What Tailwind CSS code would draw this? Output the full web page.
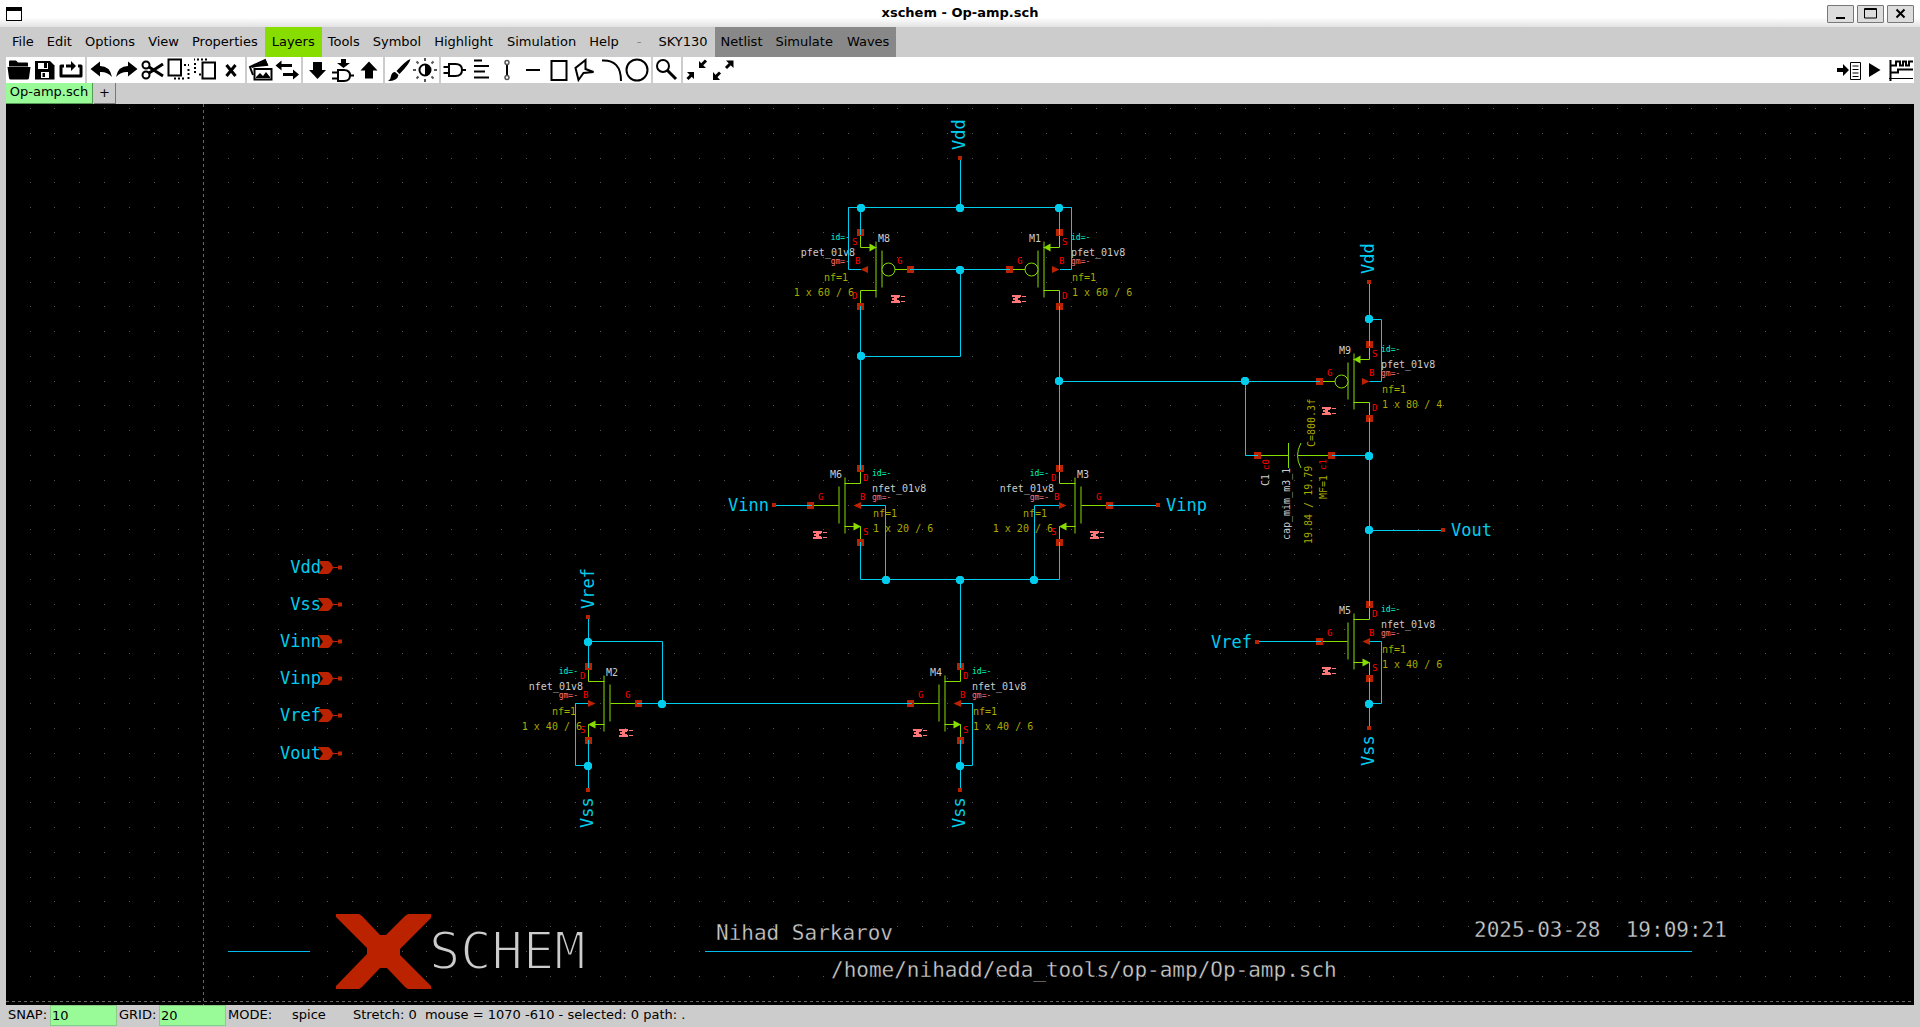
<!DOCTYPE html>
<html lang="en">
<head>
<meta charset="utf-8">
<title>xschem - Op-amp.sch</title>
<script src="https://cdn.jsdelivr.net/npm/@tailwindcss/browser@4"></script>
</head>
<body class="flex h-screen flex-col overflow-hidden bg-[#cccccc] font-['DejaVu_Sans',sans-serif] text-[13px] leading-4 text-black">

<header class="flex h-[27px] shrink-0 items-center justify-between bg-linear-to-b from-white from-65% to-[#e2e2e2] px-1.5">
  <div class="w-[87px]"><svg width="16" height="14" aria-hidden="true"><rect x=".5" y=".5" width="15" height="13" fill="#fff" stroke="#000"/><rect width="16" height="4"/></svg></div>
  <h1 class="pb-0.5 font-bold">xschem - Op-amp.sch</h1>
  <div class="flex gap-[3px]">
    <button aria-label="Minimize" class="grid h-[18px] w-[27px] place-items-center rounded-[1px] border border-[#777777] bg-[#dddddd]"><svg width="13" height="11"><path d="M2 10h9" stroke="#000" stroke-width="2"/></svg></button>
    <button aria-label="Maximize" class="grid h-[18px] w-[27px] place-items-center rounded-[1px] border border-[#777777] bg-[#dddddd]"><svg width="13" height="11"><path d="M.5 .5h12v9.500h-12zM0 1.500h13" fill="none" stroke="#000"/></svg></button>
    <button aria-label="Close" class="grid h-[18px] w-[27px] place-items-center rounded-[1px] border border-[#777777] bg-[#dddddd]"><svg width="13" height="11"><path d="M2.500 1.500l8 8m0-8l-8 8" stroke="#000" stroke-width="2"/></svg></button>
  </div>
</header>

<nav aria-label="Menu" class="flex h-[30px] shrink-0 items-stretch px-1.5">
  <button class="pr-[7px] pl-1.5">File</button>
  <button class="pr-[7px] pl-1.5">Edit</button>
  <button class="pr-[7px] pl-1.5">Options</button>
  <button class="pr-[7px] pl-1.5">View</button>
  <button class="pr-[7px] pl-1.5">Properties</button>
  <button class="bg-[#88dd00] px-[7px]">Layers</button>
  <button class="pr-[7px] pl-1.5">Tools</button>
  <button class="pr-[7px] pl-1.5">Symbol</button>
  <button class="pr-[7px] pl-1.5">Highlight</button>
  <button class="px-[7px]">Simulation</button>
  <button class="pr-[7px] pl-1.5">Help</button>
  <span class="px-[11px] pt-[7px] text-[#888888]">-</span>
  <button class="pr-[7px] pl-1.5">SKY130</button>
  <button class="bg-[#888888] pr-[7px] pl-1.5">Netlist</button>
  <button class="bg-[#888888] pr-[7px] pl-1.5">Simulate</button>
  <button class="bg-[#888888] px-[7px]">Waves</button>
</nav>

<div role="toolbar" aria-label="Tools" class="mx-1.5 flex h-[26px] shrink-0 bg-white">
  <div class="flex">
    <button aria-label="Open"><svg width="26" height="26"><path d="M3 4.500q0-1 1-1h6l2 2h9q1 0 1 1v3H3z"/><path d="M1.500 10h23l-1.500 11q0 1.500-2 1.500H5q-2 0-2-1.500z"/></svg></button>
    <button aria-label="Save"><svg width="26" height="26"><path d="M3 4h15l4.500 4.500V22.500H3z"/><path d="M6 6h10v6H6zM9 15h8v6H9z" fill="#fff"/><path d="M12 6h3v5h-3zM10.500 16h2.500v4h-2.500z"/></svg></button>
    <button aria-label="Reload"><svg width="26" height="26"><path d="M6 9H3v10h20V9h-3" fill="none" stroke="#000" stroke-width="3" stroke-linejoin="round"/><path d="M8 7.500h5V4l5 5-5 5v-3.500H8z"/></svg></button>
  </div>
  <div class="mx-px w-0.5 bg-[#cccccc]"></div>
  <div class="flex">
    <button aria-label="Undo"><svg width="26" height="26"><path d="M2.500 12L12 4.500v4.500q10 0 12 11-5-5.500-12-5v4.500z"/></svg></button>
    <button aria-label="Redo"><svg width="26" height="26"><path d="M23.500 12L14 4.500v4.500q-10 0-12 11 5-5.500 12-5v4.500z"/></svg></button>
    <button aria-label="Cut"><svg width="26" height="26" fill="none" stroke="#000" stroke-width="2"><circle cx="6" cy="8" r="3.500"/><circle cx="6" cy="18" r="3.500"/><path d="M9 10l14 9M9 16l14-9" stroke-width="3"/></svg></button>
    <button aria-label="Copy"><svg width="26" height="26" fill="none" stroke="#000" stroke-width="2"><path d="M2.500 2.500h12.500v16H2.500z"/><path d="M18 8h5M22.500 12v10M18 21.500H8" stroke-dasharray="2 2"/></svg></button>
    <button aria-label="Duplicate"><svg width="26" height="26" fill="none" stroke="#000" stroke-width="2"><path d="M10.500 5.500h12.500v16H10.500z"/><path d="M15 2.500H2M3 6v12M7 17.500h2" stroke-dasharray="2 2"/></svg></button>
    <button aria-label="Delete"><svg width="26" height="26"><path d="M8.500 8l9 11m0-11l-9 11" stroke="#000" stroke-width="3"/></svg></button>
  </div>
  <div class="mx-px w-0.5 bg-[#cccccc]"></div>
  <div class="flex">
    <button aria-label="Toggle images"><svg width="26" height="26" fill="none" stroke="#000" stroke-width="2"><path d="M5 18L2 10 17 3l2 5"/><path d="M4 10l9-3 4-3 2 4-11 1z" fill="#000"/><path d="M6.500 12h17v10.500h-17z"/><path d="M8 20l4-4 3 3 3-4 4 5v1H8z" fill="#000" stroke="none"/></svg></button>
    <button aria-label="Swap"><svg width="26" height="26"><path d="M5 8.500h13M9 17.500h12" stroke="#000" stroke-width="3"/><path d="M1.500 8.500l6-5v10zM25 17.500l-6-5v10z"/></svg></button>
  </div>
  <div class="mx-px w-0.5 bg-[#cccccc]"></div>
  <div class="flex">
    <button aria-label="Descend into schematic"><svg width="26" height="26"><path d="M9 5h9v8h4l-8.500 9L5 13h4z"/></svg></button>
    <button aria-label="Descend into symbol"><svg width="26" height="26"><path d="M11 2h5v4h4l-6.500 5L7 6h4z"/><path d="M8 13h6q6 0 6 5.500t-6 5.500H8zM2 15.500h6M2 21.500h6M20 18.500h4" fill="none" stroke="#000" stroke-width="2"/></svg></button>
    <button aria-label="Go up"><svg width="26" height="26"><path d="M9 21.500h8v-8h4.500L13 4.500 4.500 13.500H9z"/></svg></button>
  </div>
  <div class="mx-px w-0.5 bg-[#cccccc]"></div>
  <div class="flex">
    <button aria-label="Colors"><svg width="26" height="26"><path d="M24.500 2q-1 5-11 15l-3-3Q20 3.500 24.500 2zM9 15l3.500 3q-1 6-10.500 6 3-2 3-5 1-4 4-4z"/></svg></button>
    <button aria-label="Light or dark"><svg width="26" height="26"><circle cx="13" cy="13" r="5.500" fill="#fff" stroke="#000" stroke-width="2"/><path d="M13 7.500v11a5.500 5.500 0 000-11z"/><path d="M13 1v3M13 22v3M1 13h3M22 13h3M4.500 4.500l2 2M19.500 19.500l2 2M4.500 21.500l2-2M19.500 6.500l2-2" stroke="#555" stroke-width="2"/></svg></button>
  </div>
  <div class="mx-px w-0.5 bg-[#cccccc]"></div>
  <div class="flex">
    <button aria-label="Insert symbol"><svg width="26" height="26" fill="none" stroke="#000" stroke-width="2"><path d="M7 7h6.500q6.500 0 6.500 6t-6.500 6H7zM1.500 10H7M1.500 16H7M20 13h4"/></svg></button>
    <button aria-label="Insert text"><svg width="26" height="26"><path d="M6 3.500h8M6 9h15M6 14.500h11M6 20.500h15" stroke="#000" stroke-width="2"/></svg></button>
    <button aria-label="Insert wire"><svg width="26" height="26" fill="none"><path d="M13 7v12" stroke="#000" stroke-width="2"/><circle cx="13" cy="5.500" r="2" stroke="#555" stroke-width="1.500"/><circle cx="13" cy="20.500" r="2" stroke="#555" stroke-width="1.500"/></svg></button>
    <button aria-label="Insert line"><svg width="26" height="26"><path d="M6 13h14" stroke="#000" stroke-width="2"/></svg></button>
    <button aria-label="Insert rectangle"><svg width="26" height="26"><path d="M5.500 4h15v19h-15z" fill="none" stroke="#000" stroke-width="2"/></svg></button>
    <button aria-label="Insert polygon"><svg width="26" height="26"><path d="M13.500 3v9l8 3-10 1-5 7-3-12z" fill="none" stroke="#000" stroke-width="2"/></svg></button>
    <button aria-label="Insert arc"><svg width="26" height="26"><path d="M4 3.500q19-1 19 20.500" fill="none" stroke="#000" stroke-width="2"/></svg></button>
    <button aria-label="Insert circle"><svg width="26" height="26"><circle cx="13" cy="13" r="10.500" fill="none" stroke="#000" stroke-width="2"/></svg></button>
  </div>
  <div class="mx-px w-0.5 bg-[#cccccc]"></div>
  <button aria-label="Zoom"><svg width="26" height="26" fill="none" stroke="#000" stroke-width="2"><circle cx="9" cy="9" r="6"/><path d="M13 13l9 9" stroke-width="3"/></svg></button>
  <div class="mx-px w-0.5 bg-[#cccccc]"></div>
  <div class="flex">
    <button aria-label="Zoom out"><svg width="26" height="26"><path d="M15 4v7h7zM3 15h7v7z"/><path d="M22 3.500l-4 4M3.500 22l4-4" stroke="#000" stroke-width="3"/></svg></button>
    <button aria-label="Zoom in"><svg width="26" height="26"><path d="M16 3.500h7.500V11zM3 15v8h7z"/><path d="M20 7l-4 4M6 19.500l4-4" stroke="#000" stroke-width="3"/></svg></button>
  </div>
  <div class="ml-auto flex">
    <button aria-label="Netlist"><svg width="26" height="26"><path d="M1 11h6V7l6 6-6 6v-4H1z"/><path d="M14.500 5.500h10v17h-10zM16.500 9h6M16.500 12.500h6M16.500 16h6M16.500 19.500h6" fill="none" stroke="#000"/></svg></button>
    <button aria-label="Simulate"><svg width="26" height="26"><path d="M7 6v14l11.500-7z"/></svg></button>
    <button aria-label="Waves"><svg width="26" height="26" fill="none" stroke="#000" stroke-width="2"><path d="M2.500 3v21M2 8.500h6V4.500h4v4h3v-4h3v4h3v-4h4M3 15.500h7V12.500h15"/><path d="M1 21.500h24" stroke-width="1"/></svg></button>
  </div>
</div>

<div role="tablist" class="flex h-[21px] shrink-0 gap-px px-1.5">
  <button role="tab" aria-selected="true" class="h-[21px] w-[87px] border-r border-b border-[#559955] bg-[#98fb98] pb-0.5 text-center">Op-amp.sch</button>
  <button aria-label="New tab" class="h-[21px] w-[22px] border-r border-b border-[#777777] text-center">+</button>
</div>

<main class="mx-1.5 min-h-0 flex-1 bg-black">
<svg id="sheet" viewBox="6 104 1908 901" class="block h-full w-full font-['DejaVu_Sans_Mono',monospace]">
  <defs>
    <g id="core">
      <path d="M-47 0h25M-21.500-19V18M-15.500-28V28M0-34v12h-16M0 34V21h-16" fill="none" stroke="#88dd00"/>
      <path d="M-3.500-40.500h7v7h-7zM-3.500 33.500h7v7h-7zM-53.500-3.500h7v7h-7z" fill="#bb2200"/>
    </g>
    <g id="nfet"><use href="#core"/><path d="M-7 17v8L.5 21z" fill="#88dd00"/><path d="M-7 0L.5-3.500v7z" fill="#bb2200"/></g>
    <g id="pfet"><use href="#core"/><circle cx="-28" cy="0" r="6.500" fill="#000" stroke="#88dd00"/><path d="M-16-22l7-4v8z" fill="#88dd00"/><path d="M0 0l-7.500-3.500v7z" fill="#bb2200"/></g>
    <path id="probe" d="M0 0h9v2h-1v1h-2v2h2v1h1v2H0V6h3V5H1V3h2V2H0zM10 1h4v1h-4zM10 6h4v1h-4z" fill="#ff7777"/>
    <path id="node" d="M-2-4h4l2 2v4l-2 2h-4l-2-2v-4z" fill="#00ccee"/>
    <g id="port" fill="#bb2200"><path d="M0-6.500h10q3 1 5 6v1q-2 5-5 6H0q2-2 5-6.500-3-4-5-6z"/><path d="M14-.5h6v1h-6zM20-2h4v4h-4z"/></g>
  </defs>

  <path id="grid" stroke="#555555" shape-rendering="crispEdges"/>
  <path d="M203.500 104V1005M6 1001.500H1914" stroke="#666666" stroke-dasharray="3 3" shape-rendering="crispEdges"/>

  <g id="devices"></g>

  <g fill="none" stroke="#88dd00"><path d="M1261 455.500h27M1288.500 443v25M1298 455.500h31M1301 443q-7 12.500 0 25"/></g>
  <path d="M1254 452h7v7h-7zM1328 452h7v7h-7z" fill="#bb2200"/>

  <path fill="none" stroke="#00ccee" d="M960.500 158V207.500M861 269.500H848.500V207.500H1071.500V269.500H1060M860.500 207.500V235M1059.500 207.500V235M910 269.500H1010M960.500 269.500V356.500H860.500M860.500 306V470M1059.500 306V470M1059.500 381.500H1320M1245.500 381.500V455.500H1258M1332 455.500H1369.500M1369.500 282V346M1369.500 319.500H1381.500V381.500H1370M1369.500 418V606M1369.500 530.500H1443M1257 641.500H1321M1369.500 678V728M1369.500 641.500H1381.500V703.500H1369.500M774 505.500H812M1108 505.500H1158M861 505.500H885.500V579.500M1059 505.500H1034.500V579.500M860.500 542V579.500H1059.500V542M960.500 579.500V668M960.500 740V790M961 703.500H972.500V765.500H960.500M588.500 617V668M588.500 641.500H662.500V703.500M637 703.500H912M588 703.500H575.500V765.500H588.500M588.500 740V790"/>
  <path stroke="#00bbee" d="M228 951.500H310M705 951.500H1692"/>
  <g id="nodes"></g>
  <path id="ends" fill="#bb2200"/>

  <g id="nets" fill="#00ccee" font-size="17"></g>

  <g font-size="10">
    <text transform="translate(1269 486) rotate(-90)" fill="#cccccc">C1</text>
    <text transform="translate(1290 540) rotate(-90)" fill="#cccccc">cap_mim_m3_1</text>
    <text transform="translate(1315 447) rotate(-90)" fill="#aaaa00">C=800.3f</text>
    <text transform="translate(1312 544) rotate(-90)" fill="#aaaa00">19.84 / 19.79</text>
    <text transform="translate(1327 499) rotate(-90)" fill="#aaaa00">MF=1</text>
    <g font-size="9" fill="#ff0000">
      <text transform="translate(1269 470) rotate(-90)">c0</text>
      <text transform="translate(1326 470) rotate(-90)">c1</text>
    </g>
  </g>

  <path fill="#bb2200" d="M336 914h23l3 2 18 19h6l19-19 3-2h23v4l-31 31v6l31 31v3h-23l-3-2-18-19h-7l-18 19-3 2h-23v-3l31-32v-6l-31-31z"/>
  <g fill="#cccccc">
    <text x="429" y="969" font-size="52" stroke="#000000" stroke-width="2">SCHEM</text>
    <g font-size="21" stroke="#000000" stroke-width=".3">
      <text x="716" y="940">Nihad Sarkarov</text>
      <text x="831" y="977">/home/nihadd/eda_tools/op-amp/Op-amp.sch</text>
      <text x="1474" y="937" xml:space="preserve">2025-03-28  19:09:21</text>
    </g>
  </g>
</svg>
</main>

<footer class="flex h-[22px] shrink-0 items-center whitespace-pre px-1.5 pb-0.5">
  <label for="snap" class="w-11 pl-0.5">SNAP:</label>
  <input id="snap" value="10" class="h-[21px] w-[67px] border border-[#88cc88] bg-[#98fb98] px-px">
  <label for="gridsize" class="w-[42px] pl-0.5">GRID:</label>
  <input id="gridsize" value="20" class="h-[21px] w-[67px] border border-[#88cc88] bg-[#98fb98] px-px">
  <span class="w-[66px] pl-0.5">MODE:</span>
  <span class="w-[61px]">spice</span>
  <span>Stretch: 0  mouse = 1070 -610 - selected: 0 path: .</span>
</footer>

<script>
const put = (id, markup) => { document.getElementById(id).innerHTML = markup; };

// Background dots, one every 20 schematic units
const pitch = 24.795;
let dots = '';
for (let i = -8; i < 70; i++) {
  if (i === 0) continue;
  for (let j = 0; j < 36; j++) {
    dots += `M${Math.floor(203.7 + pitch * i)} ${Math.floor(108.45 + pitch * j) + 0.5}h1`;
  }
}
document.getElementById('grid').setAttribute('d', dots);

// name, kind, centre x, centre y, mirrored, size
const devices = [
  ['M8', 'pfet', 860.5, 269.5, true, '1 x 60 / 6'],
  ['M1', 'pfet', 1059.5, 269.5, false, '1 x 60 / 6'],
  ['M9', 'pfet', 1369.5, 381.5, false, '1 x 80 / 4'],
  ['M6', 'nfet', 860.5, 505.5, false, '1 x 20 / 6'],
  ['M3', 'nfet', 1059.5, 505.5, true, '1 x 20 / 6'],
  ['M5', 'nfet', 1369.5, 641.5, false, '1 x 40 / 6'],
  ['M2', 'nfet', 588.5, 703.5, true, '1 x 40 / 6'],
  ['M4', 'nfet', 960.5, 703.5, false, '1 x 40 / 6'],
];
put('devices', devices.map(([name, kind, x, y, flip, size]) => {
  const p = kind === 'pfet';
  const at = (dx, dy, fill, px, s, end) =>
    `<text x="${Math.floor(x + dx)}" y="${Math.floor(y + dy)}" fill="${fill}" font-size="${px}" text-anchor="${end ? 'end' : 'start'}">${s}</text>`;
  return `<use href="#${kind}" transform="translate(${x} ${y})${flip ? ' scale(-1 1)' : ''}"/>
    <use href="#probe" x="${Math.floor(x + (flip ? 31 : -47))}" y="${Math.floor(y + 26)}"/>`
    + at(flip ? 18 : -30, -27, '#cccccc', 10, name)
    + at(flip ? -10 : 12, -29, '#00ffcc', 8, 'id=-', flip)
    + at(flip ? -5 : 12, -13, '#cccccc', 10, kind + '_01v8', flip)
    + at(flip ? -10 : 12, -5, '#ff7777', 8, 'gm=-', flip)
    + at(flip ? -12 : 13, 12, '#aaaa00', 10, 'nf=1', flip)
    + at(flip ? -6 : 13, 27, '#aaaa00', 10, size, flip)
    + at(flip ? -8 : 3, -24, '#ff0000', 9, p ? 'S' : 'D')
    + at(flip ? -5 : 0, -5, '#ff0000', 9, 'B')
    + at(flip ? 37 : -42, -5, '#ff0000', 9, 'G')
    + at(flip ? -8 : 3, 30, '#ff0000', 9, p ? 'D' : 'S');
}).join(''));

put('nodes', [[861,208],[960,208],[1059,208],[960,270],[861,356],[1059,381],[1245,381],[1369,319],[1369,456],[1369,530],[1369,704],
  [886,580],[960,580],[1034,580],[588,642],[662,704],[588,766],[960,766]]
  .map(([x, y]) => `<use href="#node" x="${x}" y="${y}"/>`).join(''));
document.getElementById('ends').setAttribute('d', [[960,158],[1369,282],[1443,530],[774,505],[1158,505],[1257,642],[588,617],[588,790],[960,790],[1369,728]]
  .map(([x, y]) => `M${x - 2} ${y - 2}h4v4h-4z`).join(''));

// Net labels: text, x, baseline, turned upright
const nets = [
  ['Vdd', 965, 150, true], ['Vdd', 1374, 274, true], ['Vref', 594, 609, true],
  ['Vss', 593, 828, true], ['Vss', 965, 828, true], ['Vss', 1374, 766, true],
  ['Vinn', 728, 511], ['Vinp', 1166, 511], ['Vout', 1451, 536], ['Vref', 1211, 648],
];
const ports = ['Vdd', 'Vss', 'Vinn', 'Vinp', 'Vref', 'Vout'];
put('nets', nets.map(([s, x, y, up]) => up
    ? `<text transform="translate(${x} ${y}) rotate(-90)">${s}</text>`
    : `<text x="${x}" y="${y}">${s}</text>`).join('')
  + ports.map((s, i) => {
    const y = Math.round(567.5 + 37.2 * i);
    return `<use href="#port" x="318" y="${y - 0.5}"/><text x="321" y="${y + 5}" text-anchor="end">${s}</text>`;
  }).join(''));
</script>
</body>
</html>
